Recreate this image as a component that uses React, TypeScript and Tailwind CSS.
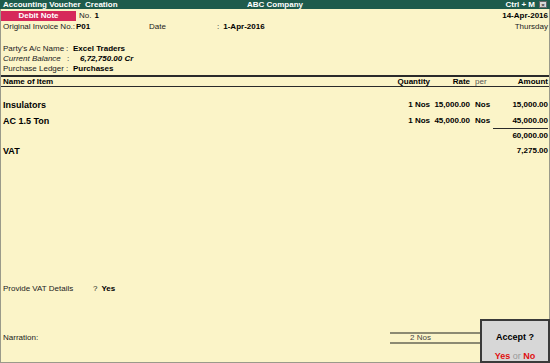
import React from 'react';

const cream = 'bg-[#fbf4c8]';

const App: React.FC = () => {
  return (
    <div className={`relative w-[550px] h-[363px] ${cream} flex flex-col overflow-hidden font-['Liberation_Sans',Arial,sans-serif] text-[8px] leading-none text-[#222] whitespace-nowrap`}>
      {/* title bar */}
      <div className="h-[9px] bg-[#1e5b4c] text-white font-bold grid grid-cols-[1fr_auto_1fr] items-center px-[3px]">
        <span className="whitespace-pre">Accounting Voucher  Creation</span>
        <span>ABC Company</span>
        <div className="flex items-center justify-end gap-[4px]">
          <span>Ctrl + M</span>
          <span className="w-[8px] h-[7px] bg-[#d8d8d8] border border-[#666] text-[#333] text-[6px] flex items-center justify-center">×</span>
        </div>
      </div>

      <div className="flex-1 flex flex-col border-l border-r border-b border-[#9a9a8a]">
        {/* voucher header */}
        <div className="flex items-center h-[11px] mt-[1px] pr-[1px]">
          <div className="w-[75px] h-[10px] bg-[#d6285a] text-white font-bold flex items-center justify-center">Debit Note</div>
          <span className="ml-[3px]">No.</span>
          <span className="ml-[3px] font-bold text-black">1</span>
          <span className="ml-auto font-bold text-black">14-Apr-2016</span>
        </div>
        <div className="flex items-center h-[11px] pl-[2px] pr-[1px]">
          <span className="w-[73px]">Original Invoice No.:</span>
          <span className="w-[73px] font-bold text-black">P01</span>
          <span className="w-[68px]">Date</span>
          <span>:</span>
          <span className="ml-[4px] font-bold text-black">1-Apr-2016</span>
          <span className="ml-auto">Thursday</span>
        </div>

        <div className="mt-[12px] flex flex-col pl-[2px]">
          <div className="flex items-center h-[10px]">
            <span className="w-[63px]">Party's A/c Name</span>
            <span className="w-[7px]">:</span>
            <span className="font-bold text-black">Excel Traders</span>
          </div>
          <div className="flex items-center h-[10px]">
            <span className="w-[64px] italic">Current Balance</span>
            <span className="w-[13px]">:</span>
            <span className="font-bold italic text-black">6,72,750.00 Cr</span>
          </div>
          <div className="flex items-center h-[10px]">
            <span className="w-[63px]">Purchase Ledger</span>
            <span className="w-[7px]">:</span>
            <span className="font-bold text-black">Purchases</span>
          </div>
        </div>

        {/* item table header */}
        <div className="mt-[1px] border-t-2 border-b border-[#2a2a2a] h-[12px] grid grid-cols-[1fr_34px_40px_23px_55px] items-center pl-[2px] pr-[1px] font-bold text-black">
          <span>Name of Item</span>
          <span className="text-right">Quantity</span>
          <span className="text-right">Rate</span>
          <span className="pl-[5px] font-normal text-[#555]">per</span>
          <span className="text-right">Amount</span>
        </div>

        {/* items */}
        <div className="flex flex-col pl-[2px] pr-[1px] pt-[11px] font-bold text-black">
          <div className="grid grid-cols-[1fr_34px_40px_23px_55px] items-center h-[14px]">
            <span className="text-[9px]">Insulators</span>
            <span className="text-right">1 Nos</span>
            <span className="text-right">15,000.00</span>
            <span className="pl-[5px]">Nos</span>
            <span className="text-right">15,000.00</span>
          </div>
          <div className="grid grid-cols-[1fr_34px_40px_23px_55px] items-center h-[14px] mt-[2px]">
            <span className="text-[9px]">AC 1.5 Ton</span>
            <span className="text-right">1 Nos</span>
            <span className="text-right">45,000.00</span>
            <span className="pl-[5px]">Nos</span>
            <span className="text-right">45,000.00</span>
          </div>
          <div className="grid grid-cols-[1fr_55px] h-[14px]">
            <span />
            <span className="border-t border-[#2a2a2a] flex items-center justify-end">60,000.00</span>
          </div>
          <div className="grid grid-cols-[1fr_55px] items-center h-[14px] mt-[2px]">
            <span className="text-[9px]">VAT</span>
            <span className="text-right">7,275.00</span>
          </div>
        </div>

        <div className="flex-1" />

        <div className="flex items-center h-[10px] pl-[2px]">
          <span className="w-[90px]">Provide VAT Details</span>
          <span>?</span>
          <span className="ml-[4px] font-bold text-black">Yes</span>
        </div>

        <div className="h-[38px]" />

        <div className="flex items-center h-[12px] pl-[2px]">
          <span className="w-[387px]">Narration:</span>
          <div className="w-[100px] h-[12px] border-t-2 border-b-2 border-[#8c8a72] flex items-center pl-[20px] text-[#444]">2 Nos</div>
        </div>

        <div className="h-[18px]" />
      </div>

      {/* accept dialog */}
      <div className="absolute right-0 bottom-0 w-[70px] h-[44px] bg-[#d7d7d7] border-2 border-[#3a3a3a] flex flex-col items-center text-[9px]">
        <span className="mt-[12px] font-bold text-black">Accept ?</span>
        <span className="mt-auto mb-0 font-bold text-[#e01010]">
          Yes <span className="font-normal text-[#999]">or</span> No
        </span>
      </div>
    </div>
  );
};

export default App;
